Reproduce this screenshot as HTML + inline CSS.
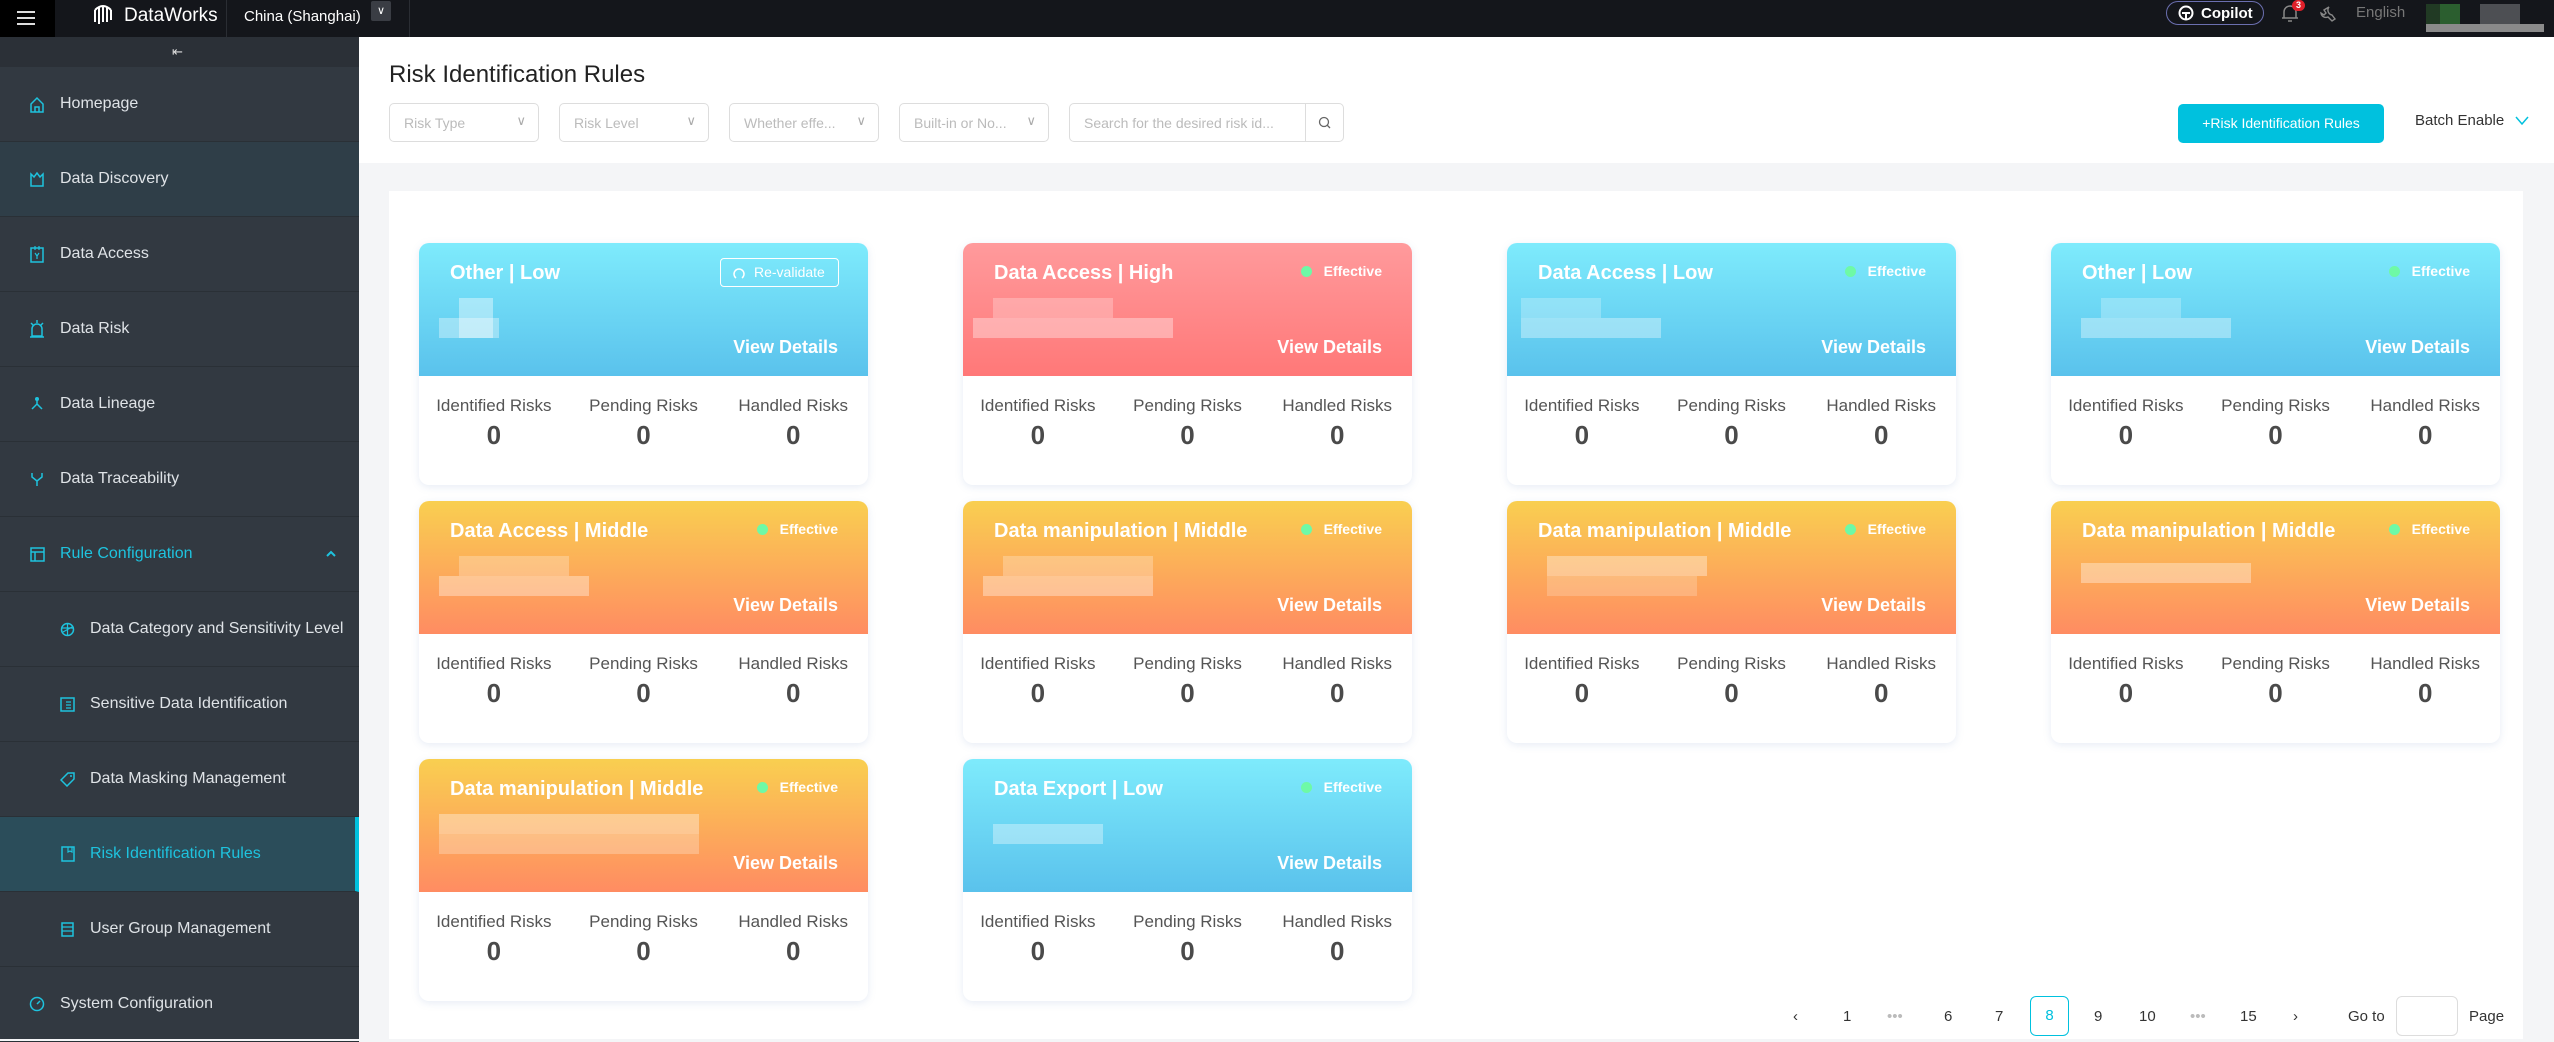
<!DOCTYPE html>
<html><head><meta charset="utf-8"><style>
*{box-sizing:border-box;margin:0;padding:0}
body{width:2554px;height:1039px;overflow:hidden;background:#f4f5f7;font-family:"Liberation Sans",sans-serif;position:relative}
.abs{position:absolute}
#top{left:0;top:0;width:2554px;height:37px;background:#14161b}
#side{left:0;top:37px;width:359px;height:1002px;background:#323941}
.mi{position:absolute;left:0;width:359px;height:75px;border-bottom:1px solid #2a3036;color:#dfe3e7;font-size:16px;display:flex;align-items:center}
.mi svg{position:absolute}
.card{position:absolute;width:449px;height:242px;background:#fff;border-radius:10px;box-shadow:0 2px 8px rgba(120,150,200,.18);overflow:hidden}
.hd{position:absolute;left:0;top:0;width:449px;height:133px}
.blue{background:linear-gradient(#7eebfc,#5ac2ec)}
.red{background:linear-gradient(#ff9a9c,#ff7878)}
.org{background:linear-gradient(#f9cf50,#ff8c62)}
.tt{position:absolute;left:31px;top:19px;color:#fff;font-weight:bold;font-size:20px}
.vd{position:absolute;right:30px;top:94px;color:#fff;font-weight:bold;font-size:18px}
.ef{position:absolute;right:30px;top:20px;color:#fff;font-weight:bold;font-size:14px}
.ef:before{content:"";display:inline-block;width:11px;height:11px;border-radius:50%;background:#6ef9a6;margin-right:12px;vertical-align:-1px}
.st{position:absolute;top:133px;left:0;width:449px;display:flex}
.st div{flex:1;text-align:center;color:#555;font-size:17px;padding-top:20px}
.st b{display:block;font-size:26px;color:#4a4a4a;margin-top:4px}
.px{position:absolute;background:rgba(255,255,255,.35)}
.fl{position:absolute;top:103px;height:39px;border:1px solid #ddd;border-radius:5px;color:#bbb;font-size:14px;padding:11px 14px;background:#fff}
.fl i{position:absolute;right:12px;top:9px;font-style:normal;color:#aaa;font-size:13px}
.pg{position:absolute;top:1008px;font-size:15px;color:#333}
</style></head><body>
<div id="top" class="abs">
 <div class="abs" style="left:0;top:0;width:55px;height:37px;background:#000"></div>
 <div class="abs" style="left:17px;top:11px;width:18px;height:2px;background:#ddd;box-shadow:0 6px 0 #ddd,0 12px 0 #ddd"></div>
 <svg class="abs" style="left:92px;top:4px" width="24" height="20" viewBox="0 0 24 20"><path d="M3 18V6 M7 20V3 M11 18V2 M15 18V3 M19 16V6 M3 6Q11-2 19 6" stroke="#fff" stroke-width="2" fill="none"/></svg>
 <div class="abs" style="left:124px;top:5px;color:#fff;font-size:19px">DataWorks</div>
 <div class="abs" style="left:226px;top:0;width:1px;height:37px;background:#2a2d33"></div>
 <div class="abs" style="left:244px;top:8px;color:#fff;font-size:15px">China (Shanghai)</div>
 <div class="abs" style="left:371px;top:1px;width:20px;height:20px;background:#3a3d44;border-radius:2px;color:#fff;font-size:11px;text-align:center;line-height:20px">&#8744;</div>
 <div class="abs" style="left:409px;top:0;width:1px;height:37px;background:#2a2d33"></div>
 <div class="abs" style="left:2166px;top:1px;width:98px;height:24px;border:1px solid #6b6fb0;border-radius:12px;color:#fff;font-size:15px;font-weight:bold;padding:3px 0 0 34px">Copilot</div>
 <svg class="abs" style="left:2178px;top:5px" width="16" height="16"><circle cx="8" cy="8" r="6.5" stroke="#fff" stroke-width="2" fill="none"/><path d="M4 8H12M8 8V14" stroke="#fff" stroke-width="2"/></svg>
 <svg class="abs" style="left:2281px;top:3px" width="18" height="19"><path d="M3 15V9a6 6 0 0 1 12 0v6H1h16M7 18h4" stroke="#888" stroke-width="1.5" fill="none"/></svg>
 <div class="abs" style="left:2292px;top:0;width:13px;height:11px;border-radius:6px;background:#e0202a;color:#fff;font-size:9px;text-align:center;line-height:11px;font-weight:bold">3</div>
 <svg class="abs" style="left:2319px;top:5px" width="18" height="17"><path d="M10 2a5 5 0 0 0 3 8l3 4-3 2-4-4a5 5 0 0 1-7-4l3 2 2-2-2-3z" stroke="#888" stroke-width="1.4" fill="none"/></svg>
 <div class="abs" style="left:2356px;top:4px;color:#777;font-size:15px">English</div>
 <div class="abs" style="left:2426px;top:4px;width:14px;height:20px;background:#213a24"></div>
 <div class="abs" style="left:2440px;top:4px;width:20px;height:20px;background:#2b5e2f"></div>
 <div class="abs" style="left:2480px;top:4px;width:40px;height:20px;background:#4d4f53"></div>
 <div class="abs" style="left:2426px;top:24px;width:118px;height:8px;background:#8a8a8a"></div>
</div>
<div id="side" class="abs">
 <div class="abs" style="left:0;top:0;width:359px;height:30px;background:#2b3037"></div>
 <div class="abs" style="left:172px;top:8px;width:13px;height:13px;color:#ddd;font-size:13px;line-height:13px">&#8676;</div>
 <div class="mi" style="top:30px"><span style="margin-left:60px">Homepage</span><svg style="left:29px" width="16" height="17"><path d="M2 8L8 2l6 6v8H2z M6 16v-5h4v5" stroke="#1ec3de" stroke-width="1.5" fill="none"/></svg></div>
 <div class="mi" style="top:105px;background:#2f3e48"><span style="margin-left:60px">Data Discovery</span><svg style="left:29px" width="16" height="16"><path d="M2 3l3 3 3-4 3 4 3-3v12H2z" stroke="#1ec3de" stroke-width="1.5" fill="none"/></svg></div>
 <div class="mi" style="top:180px"><span style="margin-left:60px">Data Access</span><svg style="left:29px" width="16" height="18"><rect x="2" y="3" width="12" height="14" stroke="#1ec3de" stroke-width="1.5" fill="none"/><path d="M6 1v4M10 1v4M6 8l2 3 2-3M8 11v3" stroke="#1ec3de" stroke-width="1.2" fill="none"/></svg></div>
 <div class="mi" style="top:255px"><span style="margin-left:60px">Data Risk</span><svg style="left:29px" width="16" height="18"><path d="M3 16V9a5 5 0 0 1 10 0v7zM1 17h14M8 0v3M2 3l2 2M14 3l-2 2" stroke="#1ec3de" stroke-width="1.5" fill="none"/></svg></div>
 <div class="mi" style="top:330px"><span style="margin-left:60px">Data Lineage</span><svg style="left:29px" width="16" height="16"><path d="M8 2v6L3 13M8 8l5 5" stroke="#1ec3de" stroke-width="1.5" fill="none"/><circle cx="8" cy="3" r="2" fill="#1ec3de"/></svg></div>
 <div class="mi" style="top:405px"><span style="margin-left:60px">Data Traceability</span><svg style="left:29px" width="16" height="16"><path d="M3 2v4l5 4 5-4V2M8 10v5" stroke="#1ec3de" stroke-width="1.5" fill="none"/></svg></div>
 <div class="mi" style="top:480px;color:#1ec3de"><span style="margin-left:60px">Rule Configuration</span><svg style="left:30px" width="15" height="15"><rect x="1" y="1" width="13" height="13" stroke="#1ec3de" stroke-width="1.5" fill="none"/><path d="M1 5h13M5 5v9" stroke="#1ec3de" stroke-width="1.5"/></svg><svg style="left:326px" width="10" height="8"><path d="M1 6l4-4 4 4" stroke="#1ec3de" stroke-width="2" fill="none"/></svg></div>
 <div class="mi" style="top:555px"><span style="margin-left:90px">Data Category and Sensitivity Level</span><svg style="left:60px" width="15" height="15"><circle cx="7.5" cy="7.5" r="6" stroke="#1ec3de" stroke-width="1.5" fill="none"/><path d="M2 6h11M7.5 2v11M3 10l9-5" stroke="#1ec3de" stroke-width="1.2"/></svg></div>
 <div class="mi" style="top:630px"><span style="margin-left:90px">Sensitive Data Identification</span><svg style="left:60px" width="15" height="15"><rect x="1" y="1" width="13" height="13" stroke="#1ec3de" stroke-width="1.5" fill="none"/><path d="M6 5h5M6 8h5M6 11h5" stroke="#1ec3de" stroke-width="1.2"/></svg></div>
 <div class="mi" style="top:705px"><span style="margin-left:90px">Data Masking Management</span><svg style="left:60px" width="15" height="15"><path d="M8 1h6v6l-7 7-6-6z" stroke="#1ec3de" stroke-width="1.5" fill="none"/><circle cx="11" cy="4" r="1" fill="#1ec3de"/></svg></div>
 <div class="mi" style="top:780px;background:#2b4d5a;color:#1ec3de;border-right:4px solid #00c1de"><span style="margin-left:90px">Risk Identification Rules</span><svg style="left:61px" width="14" height="16"><rect x="1" y="1" width="12" height="14" stroke="#1ec3de" stroke-width="1.5" fill="none"/><path d="M7 1v5l2-1 2 1V1" stroke="#1ec3de" stroke-width="1.2" fill="none"/></svg></div>
 <div class="mi" style="top:855px"><span style="margin-left:90px">User Group Management</span><svg style="left:61px" width="13" height="15"><rect x="1" y="1" width="11" height="13" stroke="#1ec3de" stroke-width="1.5" fill="none"/><path d="M1 5h11M1 9h11" stroke="#1ec3de" stroke-width="1.2"/></svg></div>
 <div class="mi" style="top:930px"><span style="margin-left:60px">System Configuration</span><svg style="left:29px" width="16" height="16"><circle cx="8" cy="8" r="6.5" stroke="#1ec3de" stroke-width="1.5" fill="none"/><path d="M8 8l3-3" stroke="#1ec3de" stroke-width="1.5"/></svg></div>
</div>
<div class="abs" style="left:359px;top:37px;width:2195px;height:126px;background:#fff"></div>
<div class="abs" style="left:389px;top:61px;font-size:24px;color:#222">Risk Identification Rules</div>
<div class="fl" style="left:389px;width:150px">Risk Type<i>&#8744;</i></div>
<div class="fl" style="left:559px;width:150px">Risk Level<i>&#8744;</i></div>
<div class="fl" style="left:729px;width:150px">Whether effe...<i>&#8744;</i></div>
<div class="fl" style="left:899px;width:150px">Built-in or No...<i>&#8744;</i></div>
<div class="fl" style="left:1069px;width:275px">Search for the desired risk id...<span class="abs" style="left:235px;top:0;width:1px;height:37px;background:#ddd"></span><svg class="abs" style="left:247px;top:11px" width="16" height="16"><circle cx="7" cy="7" r="4.5" stroke="#666" stroke-width="1.3" fill="none"/><path d="M10 10l3 3" stroke="#666" stroke-width="1.3"/></svg></div>
<div class="abs" style="left:2178px;top:104px;width:206px;height:39px;background:#00c1de;border-radius:5px;color:#fff;font-size:14px;text-align:center;line-height:39px">+Risk Identification Rules</div>
<div class="abs" style="left:2415px;top:112px;font-size:15px;color:#333">Batch Enable</div>
<svg class="abs" style="left:2515px;top:116px" width="14" height="10"><path d="M1 1l6 7 6-7" stroke="#00c1de" stroke-width="1.5" fill="none"/></svg>
<div class="abs" style="left:389px;top:191px;width:2134px;height:848px;background:#fff"></div>

<div class="card" style="left:419px;top:243px"><div class="hd blue"><div class="tt">Other | Low</div><div class="abs" style="left:301px;top:15px;width:119px;height:29px;border:1px solid #fff;border-radius:4px;color:#fff;font-size:14px;padding:5px 0 0 33px">Re-validate</div><svg class="abs" style="left:314px;top:23px" width="12" height="14"><path d="M3 12A5 5 0 1 1 9 12" stroke="#fff" stroke-width="1.5" fill="none"/></svg><div class="px" style="left:20px;top:75px;width:60px;height:20px"></div><div class="px" style="left:40px;top:55px;width:34px;height:40px;background:rgba(255,255,255,.4)"></div><div class="vd">View Details</div></div><div class="st"><div>Identified Risks<b>0</b></div><div>Pending Risks<b>0</b></div><div>Handled Risks<b>0</b></div></div></div>

<div class="card" style="left:963px;top:243px"><div class="hd red"><div class="tt">Data Access | High</div><div class="ef">Effective</div><div class="px" style="left:10px;top:75px;width:200px;height:20px"></div><div class="px" style="left:30px;top:55px;width:120px;height:20px;background:rgba(255,255,255,.25)"></div><div class="vd">View Details</div></div><div class="st"><div>Identified Risks<b>0</b></div><div>Pending Risks<b>0</b></div><div>Handled Risks<b>0</b></div></div></div>

<div class="card" style="left:1507px;top:243px"><div class="hd blue"><div class="tt">Data Access | Low</div><div class="ef">Effective</div><div class="px" style="left:14px;top:75px;width:140px;height:20px"></div><div class="px" style="left:14px;top:55px;width:80px;height:20px;background:rgba(255,255,255,.25)"></div><div class="vd">View Details</div></div><div class="st"><div>Identified Risks<b>0</b></div><div>Pending Risks<b>0</b></div><div>Handled Risks<b>0</b></div></div></div>

<div class="card" style="left:2051px;top:243px"><div class="hd blue"><div class="tt">Other | Low</div><div class="ef">Effective</div><div class="px" style="left:30px;top:75px;width:150px;height:20px"></div><div class="px" style="left:50px;top:55px;width:80px;height:20px;background:rgba(255,255,255,.25)"></div><div class="vd">View Details</div></div><div class="st"><div>Identified Risks<b>0</b></div><div>Pending Risks<b>0</b></div><div>Handled Risks<b>0</b></div></div></div>

<div class="card" style="left:419px;top:501px"><div class="hd org"><div class="tt">Data Access | Middle</div><div class="ef">Effective</div><div class="px" style="left:20px;top:75px;width:150px;height:20px"></div><div class="px" style="left:40px;top:55px;width:110px;height:20px;background:rgba(255,255,255,.25)"></div><div class="vd">View Details</div></div><div class="st"><div>Identified Risks<b>0</b></div><div>Pending Risks<b>0</b></div><div>Handled Risks<b>0</b></div></div></div>

<div class="card" style="left:963px;top:501px"><div class="hd org"><div class="tt">Data manipulation | Middle</div><div class="ef">Effective</div><div class="px" style="left:20px;top:75px;width:170px;height:20px"></div><div class="px" style="left:40px;top:55px;width:150px;height:20px;background:rgba(255,255,255,.25)"></div><div class="vd">View Details</div></div><div class="st"><div>Identified Risks<b>0</b></div><div>Pending Risks<b>0</b></div><div>Handled Risks<b>0</b></div></div></div>

<div class="card" style="left:1507px;top:501px"><div class="hd org"><div class="tt">Data manipulation | Middle</div><div class="ef">Effective</div><div class="px" style="left:40px;top:75px;width:150px;height:20px;background:rgba(255,255,255,.2)"></div><div class="px" style="left:40px;top:55px;width:160px;height:20px"></div><div class="vd">View Details</div></div><div class="st"><div>Identified Risks<b>0</b></div><div>Pending Risks<b>0</b></div><div>Handled Risks<b>0</b></div></div></div>

<div class="card" style="left:2051px;top:501px"><div class="hd org"><div class="tt">Data manipulation | Middle</div><div class="ef">Effective</div><div class="px" style="left:30px;top:62px;width:170px;height:20px"></div><div class="vd">View Details</div></div><div class="st"><div>Identified Risks<b>0</b></div><div>Pending Risks<b>0</b></div><div>Handled Risks<b>0</b></div></div></div>

<div class="card" style="left:419px;top:759px"><div class="hd org"><div class="tt">Data manipulation | Middle</div><div class="ef">Effective</div><div class="px" style="left:20px;top:75px;width:260px;height:20px;background:rgba(255,255,255,.25)"></div><div class="px" style="left:20px;top:55px;width:260px;height:20px"></div><div class="vd">View Details</div></div><div class="st"><div>Identified Risks<b>0</b></div><div>Pending Risks<b>0</b></div><div>Handled Risks<b>0</b></div></div></div>

<div class="card" style="left:963px;top:759px"><div class="hd blue"><div class="tt">Data Export | Low</div><div class="ef">Effective</div><div class="px" style="left:30px;top:65px;width:110px;height:20px"></div><div class="vd">View Details</div></div><div class="st"><div>Identified Risks<b>0</b></div><div>Pending Risks<b>0</b></div><div>Handled Risks<b>0</b></div></div></div>

<div class="pg" style="left:1793px">&lsaquo;</div>
<div class="pg" style="left:1843px">1</div>
<div class="pg" style="left:1887px;color:#bbb">&bull;&bull;&bull;</div>
<div class="pg" style="left:1944px">6</div>
<div class="pg" style="left:1995px">7</div>
<div class="abs" style="left:2030px;top:996px;width:39px;height:40px;border:1px solid #00c1de;border-radius:6px;color:#00c1de;font-size:15px;text-align:center;line-height:38px">8</div>
<div class="pg" style="left:2094px">9</div>
<div class="pg" style="left:2139px">10</div>
<div class="pg" style="left:2190px;color:#bbb">&bull;&bull;&bull;</div>
<div class="pg" style="left:2240px">15</div>
<div class="pg" style="left:2293px">&rsaquo;</div>
<div class="pg" style="left:2348px">Go to</div>
<div class="abs" style="left:2396px;top:996px;width:62px;height:40px;border:1px solid #ddd;border-radius:6px;background:#fff"></div>
<div class="pg" style="left:2469px">Page</div>
</body></html>
